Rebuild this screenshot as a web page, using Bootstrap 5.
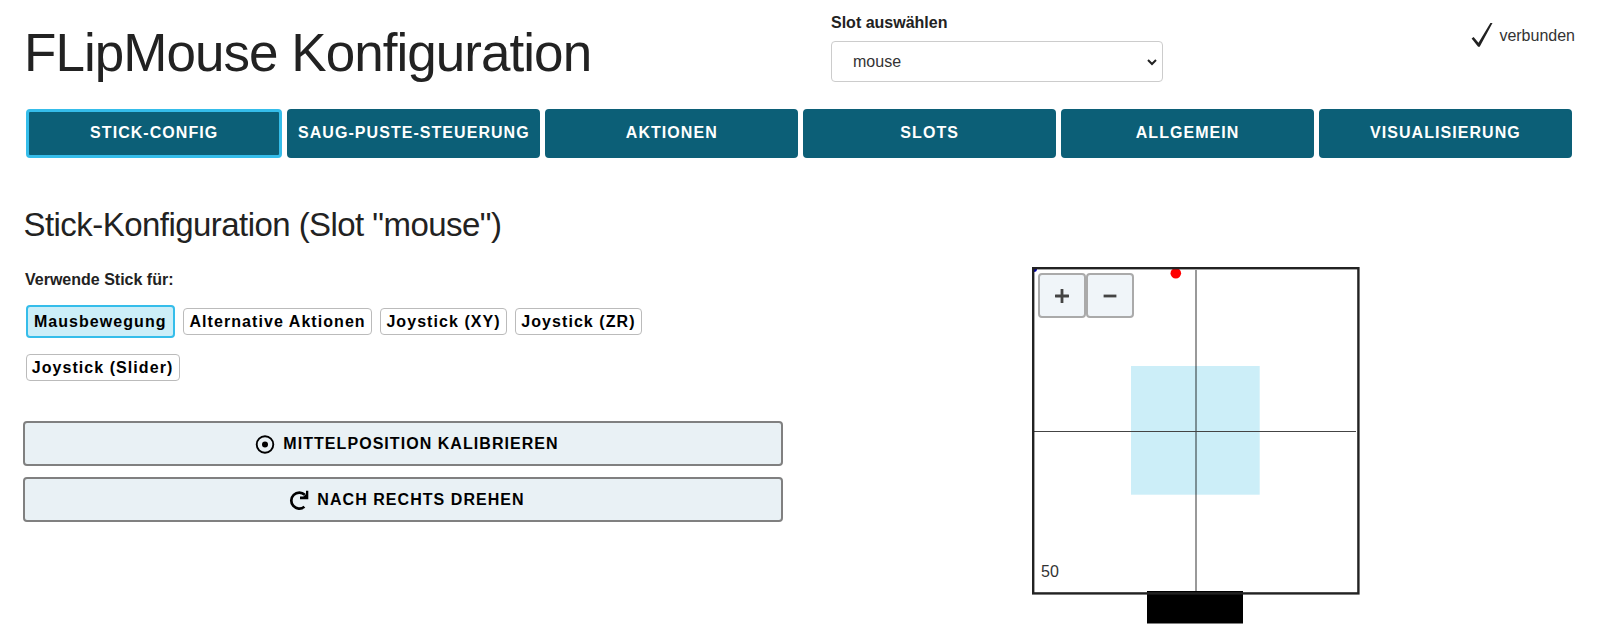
<!DOCTYPE html>
<html lang="de">
<head>
<meta charset="utf-8">
<meta name="viewport" content="width=device-width, initial-scale=1">
<title>FLipMouse Konfiguration</title>
<link href="https://cdn.jsdelivr.net/npm/bootstrap@5.3.0/dist/css/bootstrap.min.css" rel="stylesheet">
<style>
body { font-family: "Liberation Sans", Arial, sans-serif; font-size: 16px; line-height: 24px; color: #222; overflow: hidden; }
.page-head { height: 109px; padding-left: 24px; padding-right: 25px; }
.page-title { width: 807px; padding-top: 22px; font-size: 53px; line-height: 62px; letter-spacing: -.96px; font-weight: 400; }
.slot-box { width: 332px; padding-top: 11px; }
.slot-box label { font-weight: 700; }
.slot-box .form-select { height: 41px; margin-top: 6px; padding: 1px 20px 0 21px; font-size: 16px; color: #333; border-color: #ccc; border-radius: 4px; background-size: 12px 12px; background-position: right 4px center;
  background-image: url("data:image/svg+xml,%3Csvg xmlns='http://www.w3.org/2000/svg' viewBox='0 0 12 12'%3E%3Cpath d='M2 4l4 4 4-4' fill='none' stroke='%23222' stroke-width='2'/%3E%3C/svg%3E"); }
.state { padding-top: 22px; gap: 6px; color: #333; }
.tabs { display: grid; grid-template-columns: 256.4px 252.8px 252.8px 252.8px 252.8px 252.8px; column-gap: 5.1px; padding-left: 26px; }
.tabs .btn { height: 49px; padding: 0; font-size: 16px; font-weight: 700; letter-spacing: 1.05px; line-height: 42px; color: #fff; background: #0c5f77; border: 2px solid #0c5f77; border-bottom-width: 4px; border-radius: 4px; white-space: nowrap; }
.tabs .btn.active { color: #fff; background: #0c5f77; border: 3px solid #35bdea; line-height: 41px; padding-bottom: 2px; }
.left-side { width: 760px; margin-left: 23px; }
.sub-title { margin: 45px 0 0 .5px; font-size: 33px; line-height: 44px; letter-spacing: -.55px; font-weight: 400; }
.use-for { margin: 21px 0 0 2px; font-weight: 700; }
.chips { margin: 13px 0 0 2.5px; width: 660px; column-gap: 8.3px; }
.chips span { height: 27px; margin: 3px 0; padding: 0 5.2px; border: 1px solid #bbb; border-radius: 4px; font-weight: 700; letter-spacing: 1.06px; line-height: 25px; color: #000; white-space: nowrap; }
.chips .on { height: 33px; margin: 0; padding: 2px 6.4px; border: 2px solid #35bdea; background: #cceef8; }
.row-two { margin-top: 13px !important; }
.act { height: 45px; padding: 1px 0 0 8px; font-size: 16px; font-weight: 700; letter-spacing: 1.05px; color: #000; background: #e9f1f5; border: 2px solid #808080; border-radius: 4px; gap: 8px; }
.acts { margin-top: 37px; gap: 10.5px; }
.stick-view { width: 328px; height: 357px; margin: 109px 0 0 249px; }
.zoomers { left: 5.5px; top: 6px; }
.zoomers .btn { width: 48px; height: 45px; padding: 0; background: #f0f5f9; border: 2px solid #aaa; border-radius: 4px; }
</style>
</head>
<body>
<header class="page-head d-flex align-items-start">
  <h1 class="page-title mb-0">FLipMouse Konfiguration</h1>
  <div class="slot-box">
    <label class="d-block" for="slot">Slot auswählen</label>
    <select class="form-select" id="slot"><option>mouse</option></select>
  </div>
  <div class="state d-flex ms-auto">
    <svg width="22" height="26" viewBox="0 0 22 26"><path d="M0.6 16.6 2.6 14.9 7.5 20.8 19.4 1H21.5L8.7 24.8H7.1Z" fill="#222"/></svg>
    <span style="line-height:27px">verbunden</span>
  </div>
</header>
<nav class="tabs">
  <button class="btn active">STICK-CONFIG</button>
  <button class="btn">SAUG-PUSTE-STEUERUNG</button>
  <button class="btn">AKTIONEN</button>
  <button class="btn">SLOTS</button>
  <button class="btn">ALLGEMEIN</button>
  <button class="btn">VISUALISIERUNG</button>
</nav>
<main class="d-flex align-items-start">
  <section class="left-side">
    <h2 class="sub-title">Stick-Konfiguration (Slot "mouse")</h2>
    <div class="use-for">Verwende Stick für:</div>
    <div class="chips d-flex">
      <span class="on">Mausbewegung</span><span>Alternative Aktionen</span><span>Joystick (XY)</span><span>Joystick (ZR)</span>
    </div>
    <div class="chips row-two d-flex"><span>Joystick (Slider)</span></div>
    <div class="acts d-flex flex-column">
      <button class="btn act d-flex align-items-center justify-content-center">
        <svg width="20" height="20" viewBox="0 0 20 20"><circle cx="10" cy="10.5" r="8.3" fill="none" stroke="#000" stroke-width="1.9"/><circle cx="10" cy="10.5" r="3" fill="#000"/></svg>
        <span>MITTELPOSITION KALIBRIEREN</span>
      </button>
      <button class="btn act d-flex align-items-center justify-content-center">
        <svg width="20" height="20" viewBox="0 0 20 20"><path d="M15.4 16.8A8 8 0 1 1 15.8 4.8" fill="none" stroke="#000" stroke-width="2.7"/><path d="M19.3 .8V9.2H11V6.6H14.4L17 4V.8Z" fill="#000"/></svg>
        <span>NACH RECHTS DREHEN</span>
      </button>
    </div>
  </section>
  <section class="stick-view position-relative">
    <svg class="d-block" width="328" height="357" viewBox="0 0 328 357" font-family="Liberation Sans, Arial, sans-serif">
      <rect x="99" y="99" width="128.7" height="128.7" fill="#cceef8"/>
      <path d="M164 3V325" stroke="#000" stroke-opacity=".5" stroke-width="1.6"/>
      <path d="M2 164.5H324" stroke="#444" stroke-width="1"/>
      <rect x="115" y="324" width="96" height="32.5" fill="#000"/>
      <path d="M2 2H5A3 3 0 0 1 2 5Z" fill="#00a"/>
      <circle cx="143.8" cy="6.3" r="5.3" fill="#f00"/>
      <rect x="1.2" y="1.2" width="325.2" height="325.2" fill="none" stroke="#222" stroke-width="2.4"/>
      <text x="9" y="309.5" font-size="16" fill="#333">50</text>
    </svg>
    <div class="zoomers position-absolute d-flex">
      <button class="btn d-flex align-items-center justify-content-center" aria-label="plus"><svg width="14" height="14" viewBox="0 0 14 14"><path d="M7 .6V13.4M.6 7H13.4" stroke="#444" stroke-width="2.8" stroke-linecap="round"/></svg></button>
      <button class="btn d-flex align-items-center justify-content-center" aria-label="minus"><svg width="14" height="14" viewBox="0 0 14 14"><path d="M.6 7H13.4" stroke="#444" stroke-width="2.8"/></svg></button>
    </div>
  </section>
</main>
<script src="https://cdn.jsdelivr.net/npm/bootstrap@5.3.0/dist/js/bootstrap.bundle.min.js"></script>
</body>
</html>
